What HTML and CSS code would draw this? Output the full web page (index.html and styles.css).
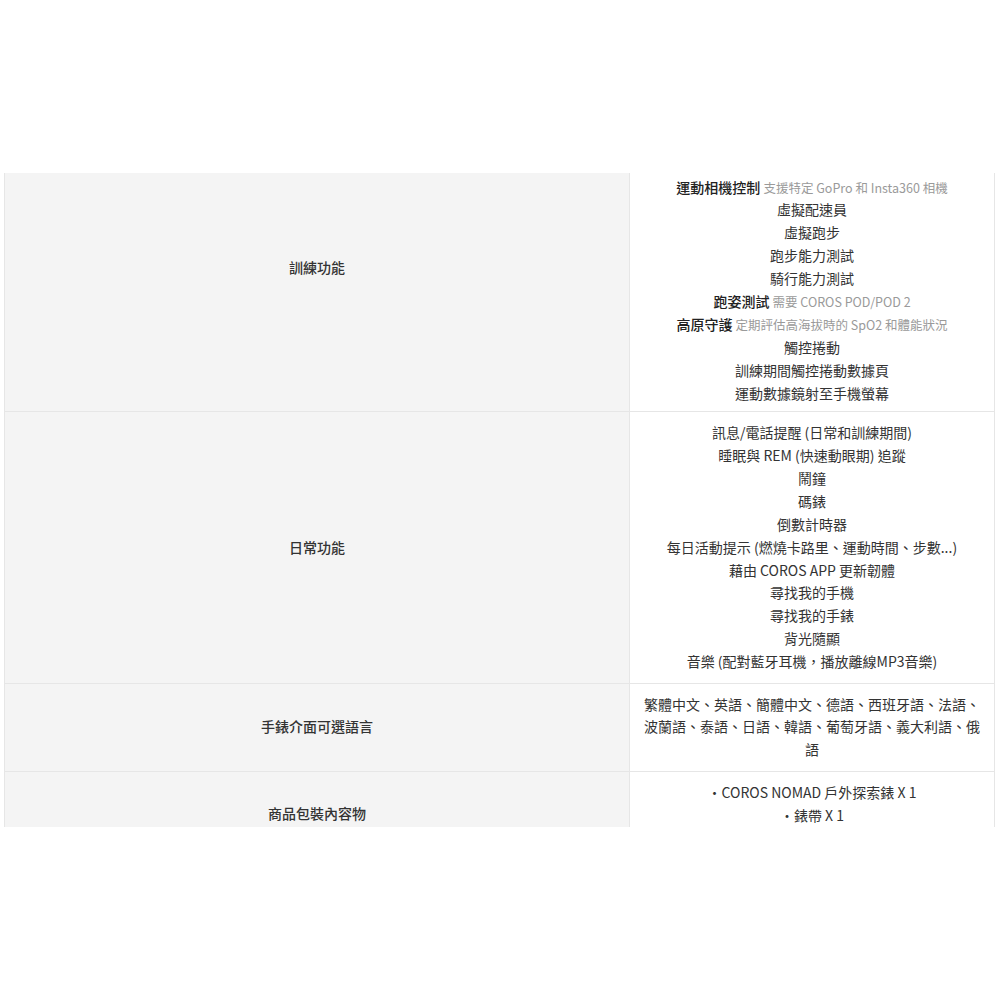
FILE: index.html
```html
<!DOCTYPE html>
<html lang="zh-Hant">
<head>
<meta charset="utf-8">
<link rel="stylesheet" href="styles.css">
</head>
<body>
<div class="spec-wrap">
  <table class="spec">
    <colgroup>
      <col class="col-label">
      <col class="col-value">
    </colgroup>
    <tr class="first">
      <th>訓練功能</th>
      <td>
        <div><b>運動相機控制</b> <span class="note">支援特定 GoPro 和 Insta360 相機</span></div>
        <div>虛擬配速員</div>
        <div>虛擬跑步</div>
        <div>跑步能力測試</div>
        <div>騎行能力測試</div>
        <div><b>跑姿測試</b> <span class="note">需要 COROS POD/POD 2</span></div>
        <div><b>高原守護</b> <span class="note">定期評估高海拔時的 SpO2 和體能狀況</span></div>
        <div>觸控捲動</div>
        <div>訓練期間觸控捲動數據頁</div>
        <div>運動數據鏡射至手機螢幕</div>
      </td>
    </tr>
    <tr>
      <th>日常功能</th>
      <td>
        <div>訊息/電話提醒 (日常和訓練期間)</div>
        <div>睡眠與 REM (快速動眼期) 追蹤</div>
        <div>鬧鐘</div>
        <div>碼錶</div>
        <div>倒數計時器</div>
        <div>每日活動提示 (燃燒卡路里、運動時間、步數...)</div>
        <div>藉由 COROS APP 更新韌體</div>
        <div>尋找我的手機</div>
        <div>尋找我的手錶</div>
        <div>背光隨顯</div>
        <div>音樂 (配對藍牙耳機，播放離線MP3音樂)</div>
      </td>
    </tr>
    <tr>
      <th>手錶介面可選語言</th>
      <td>繁體中文、英語、簡體中文、德語、西班牙語、法語、波蘭語、泰語、日語、韓語、葡萄牙語、義大利語、俄語</td>
    </tr>
    <tr class="last">
      <th>商品包裝內容物</th>
      <td>
        <div>・COROS NOMAD 戶外探索錶 X 1</div>
        <div>・錶帶 X 1</div>
      </td>
    </tr>
  </table>
</div>
</body>
</html>
```
FILE: styles.css
```css
html, body {
  margin: 0;
  padding: 0;
  background: #ffffff;
}
body {
  font-family: "Noto Sans CJK TC", "Noto Sans", sans-serif;
  color: #333333;
  font-size: 14px;
  line-height: 22.9px;
}
.spec-wrap {
  margin: 173px 0 0 3px;
  padding: 0 1px;
  width: 990px;
  height: 654px;
  overflow: hidden;
}
.spec {
  width: 990px;
  border-collapse: collapse;
  table-layout: fixed;
}
.col-label {
  width: 625px;
}
.col-value {
  width: 365px;
}
.spec th {
  background: #f4f4f4;
  font-weight: 500;
  color: #333333;
  text-align: center;
  vertical-align: middle;
  border: 1px solid #e6e6e6;
  padding: 9px 10px 9.5px;
}
.spec td {
  background: #ffffff;
  text-align: center;
  vertical-align: middle;
  border: 1px solid #e6e6e6;
  padding: 9px 10px 9.5px;
}
.spec tr.first th,
.spec tr.first td {
  border-top: none;
  padding-top: 2.5px;
}
.spec tr.first td {
  padding-bottom: 6.5px;
}
.spec tr.first th {
  padding-bottom: 52.5px;
}
.spec tr.last td {
  padding-bottom: 29.5px;
}
.spec b {
  font-weight: 500;
  color: #222222;
}
.note {
  font-size: 12.5px;
  line-height: 1;
  color: #9a9a9a;
}
```
